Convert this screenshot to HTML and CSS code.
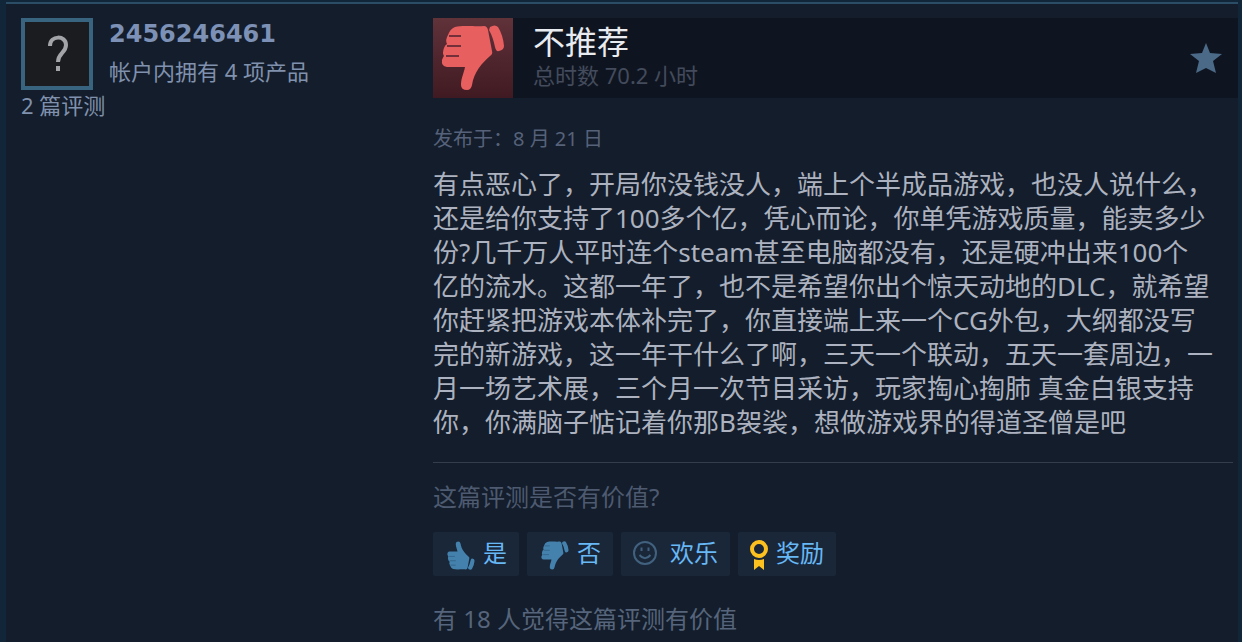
FILE: index.html
```html
<!DOCTYPE html>
<html lang="zh-CN">
<head>
    <meta charset="UTF-8">
    <meta name="viewport" content="width=device-width, initial-scale=1.0">
    <title>用户评测</title>
    <link rel="stylesheet" href="styles.css">
</head>
<body>

    <!-- shared thumb shape -->
    <svg class="sprite" aria-hidden="true">
        <symbol id="thumb" viewBox="0 0 64 66">
            <path d="M14 2 C22 0 36 2 43 1 Q46 1 47 5 L51 26 Q52 29 49 31 C41 38 33 47 31 60 Q30 65 26 65 Q20 65 20 60 C20 53 23 48 24 42 L6 42 Q0 41 1 35 Q2 32 3 31 Q1 28 3 23 Q4 20 6 19 Q4 15 7 10 Q9 4 14 2 Z"/>
            <path d="M49 2 Q54 -1 57 2 Q62 10 63 21 Q63 25 58 26 Q55 27 54 22 Q52 12 48 5 Z"/>
            <path class="slit" d="M8 11 H20 M6 21 H20 M5 31 H18"/>
        </symbol>
    </svg>

    <article class="review">
        <aside class="author">
            <div class="author-top">
                <a class="avatar" href="#" aria-label="2456246461">
                    <svg viewBox="0 0 64 64" aria-hidden="true">
                        <path d="M25 24 C25 13 41 13 41 23 C41 31 33 31 33 40" fill="none" stroke="#a3a4a8" stroke-width="4"/>
                        <rect x="31" y="44" width="4" height="5" fill="#a3a4a8"/>
                    </svg>
                </a>
                <div class="author-info">
                    <a class="author-name" href="#">2456246461</a>
                    <a class="author-link" href="#">帐户内拥有 4 项产品</a>
                </div>
            </div>
            <a class="author-link" href="#">2 篇评测</a>
        </aside>

        <div class="content">
            <header class="verdict">
                <div class="verdict-icon">
                    <svg viewBox="0 0 64 66" aria-hidden="true"><use href="#thumb"/></svg>
                </div>
                <div class="verdict-text">
                    <h1>不推荐</h1>
                    <p>总时数 70.2 小时</p>
                </div>
                <svg class="star" viewBox="0 0 32 30" aria-hidden="true">
                    <path d="M16 0 L20 10 L32 11 L23 18 L26 30 L16 25 L6 30 L9 18 L0 11 L12 10 Z"/>
                </svg>
            </header>

            <p class="posted">发布于：8 月 21 日</p>

            <p class="review-text">有点恶心了，开局你没钱没人，端上个半成品游戏，也没人说什么，还是给你支持了100多个亿，凭心而论，你单凭游戏质量，能卖多少份?几千万人平时连个steam甚至电脑都没有，还是硬冲出来100个<br>亿的流水。这都一年了，也不是希望你出个惊天动地的DLC，就希望你赶紧把游戏本体补完了，你直接端上来一个CG外包，大纲都没写完的新游戏，这一年干什么了啊，三天一个联动，五天一套周边，一月一场艺术展，三个月一次节目采访，玩家掏心掏肺 真金白银支持你，你满脑子惦记着你那B袈裟，想做游戏界的得道圣僧是吧</p>

            <p class="question">这篇评测是否有价值?</p>

            <div class="votes">
                <button type="button">
                    <svg class="icon-thumb flip" viewBox="0 0 64 66" aria-hidden="true"><use href="#thumb"/></svg>
                    <span>是</span>
                </button>
                <button type="button">
                    <svg class="icon-thumb" viewBox="0 0 64 66" aria-hidden="true"><use href="#thumb"/></svg>
                    <span>否</span>
                </button>
                <button type="button" class="funny">
                    <svg class="icon-smile" viewBox="0 0 24 24" aria-hidden="true">
                        <circle cx="12" cy="12" r="11"/>
                        <path d="M8.500 6.500 V10 M15.500 6.500 V10 M6.500 14 Q12 20.500 17.500 14"/>
                    </svg>
                    <span>欢乐</span>
                </button>
                <button type="button" class="award">
                    <svg class="icon-award" viewBox="0 0 18 30" aria-hidden="true">
                        <circle cx="9" cy="9" r="7"/>
                        <path d="M4 19 Q9 21 14 19 V30 L9 26 L4 30 Z"/>
                    </svg>
                    <span>奖励</span>
                </button>
            </div>

            <p class="helpful">有 18 人觉得这篇评测有价值</p>
        </div>
    </article>

</body>
</html>
```
FILE: styles.css
```css
* {
    box-sizing: border-box;
}
body {
    margin: 0;
    padding-top: 2px;
    background-color: #12263a;
    color: #acb2b8;
    font-family: "Noto Sans", "Noto Sans CJK SC", sans-serif;
}
h1, p {
    margin: 0;
    font-weight: normal;
}
a {
    color: inherit;
    text-decoration: none;
}
.sprite {
    position: absolute;
    width: 0;
    height: 0;
}
.review {
    display: flex;
    min-height: calc(100vh - 2px);
    margin: 0 4px 0 6px;
    padding: 14px 0 0 15px;
    border-top: 2px solid #2c4d66;
    background-color: #141d2b;
}

/* author column */
.author {
    flex: 0 0 412px;
    color: #8091ad;
}
.author-top {
    display: flex;
    gap: 16px;
}
.avatar {
    width: 72px;
    height: 72px;
    border: 4px solid #386480;
    background-color: #1b1c1f;
}
.avatar svg {
    display: block;
}
.author-info {
    display: flex;
    flex-direction: column;
}
.author-name {
    font-family: "DejaVu Sans", sans-serif;
    font-size: 24px;
    font-weight: bold;
    line-height: 32px;
    margin-bottom: 6px;
    color: #7c91b5;
}
.author-link {
    font-size: 22px;
    line-height: 30px;
}

/* review column */
.content {
    flex: 1;
    min-width: 0;
}
.verdict {
    display: flex;
    align-items: center;
    height: 80px;
    padding-right: 16px;
    background-color: #0f1520;
}
.verdict-icon {
    display: flex;
    align-items: center;
    justify-content: center;
    width: 80px;
    height: 80px;
    background: linear-gradient(#60323a, #401a22);
}
.verdict-icon svg {
    width: 64px;
    height: 66px;
    fill: #e85f5f;
    color: #74303a;
}
.slit {
    fill: none;
    stroke: currentColor;
    stroke-width: 2;
}
.verdict-text {
    flex: 1;
    margin-left: 20px;
}
.verdict-text h1 {
    font-size: 32px;
    line-height: 34px;
    color: #e8ebef;
}
.verdict-text p {
    font-size: 22px;
    line-height: 32px;
    color: #434b5c;
}
.star {
    width: 32px;
    height: 30px;
    fill: #4b6a87;
}
.posted {
    margin-top: 26px;
    font-size: 20px;
    line-height: 30px;
    color: #56627a;
}
.review-text {
    padding: 13px 20px 23px 0;
    font-size: 26px;
    line-height: 34px;
    color: #acb2bf;
}
.question {
    margin-right: 5px;
    padding-top: 18px;
    border-top: 1px solid #343d4a;
    font-size: 24px;
    line-height: 32px;
    color: #4d5a70;
}
.votes {
    display: flex;
    gap: 8px;
    margin-top: 19px;
}
.votes button {
    display: flex;
    align-items: center;
    gap: 8px;
    height: 44px;
    padding: 0 12px 0 14px;
    border: none;
    border-radius: 2px;
    background-color: #1a2739;
    color: #67b8f5;
    font-family: inherit;
    font-size: 24px;
    cursor: pointer;
}
.votes button:hover {
    background-color: #26405c;
}
.votes button span {
    padding-bottom: 6px;
}
.votes .funny {
    gap: 13px;
    padding-left: 12px;
}
.votes .award {
    padding-left: 12px;
}
.icon-thumb {
    width: 28px;
    height: 29px;
    margin-top: 3px;
    fill: #4482ad;
    color: #326489;
}
.flip {
    transform: scaleY(-1);
}
.icon-smile {
    width: 24px;
    height: 24px;
    margin-bottom: 3px;
    fill: none;
    stroke: #41617e;
    stroke-width: 2;
}
.icon-award {
    width: 18px;
    height: 30px;
    margin-top: 2px;
    fill: #fdc11f;
}
.icon-award circle {
    fill: none;
    stroke: #fdc11f;
    stroke-width: 4;
}
.helpful {
    margin-top: 27px;
    font-size: 24px;
    line-height: 32px;
    color: #56657b;
}
```
